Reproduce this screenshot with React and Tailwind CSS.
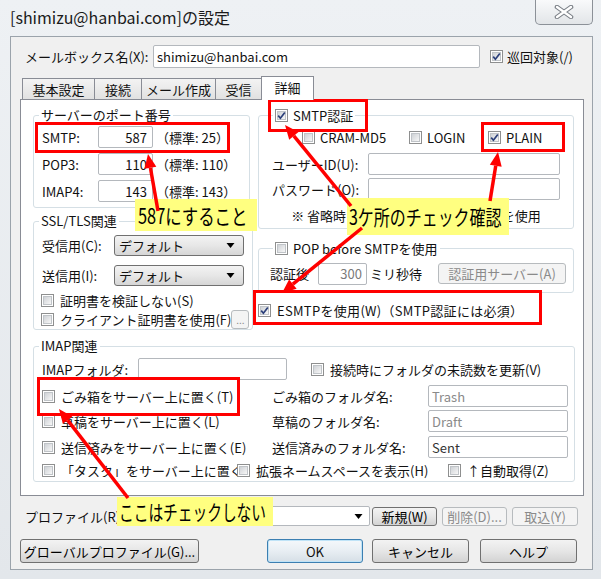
const Check = ({ checked, className = "" }) => (
  <span className={`inline-flex w-[13px] h-[13px] shrink-0 border border-[#8e8f8f] bg-white p-[1px] ${className}`}>
    <span className="relative flex-1 bg-linear-to-br from-[#cfd2d6] to-[#f7f7f7] border border-[#c0c4c8]">
      {checked && (
        <svg viewBox="0 0 9 9" className="absolute -left-[1px] -top-[1px] w-[9px] h-[9px]">
          <path d="M1.2 4.6 L3.4 7.2 L7.8 1.4" fill="none" stroke="#2b3f7a" strokeWidth="1.7" />
        </svg>
      )}
    </span>
  </span>
);

const Field = ({ className = "", children }) => (
  <div className={`h-[22px] flex items-center bg-white border border-[#b4b8bd] rounded-[2px] ${className}`}>
    {children}
  </div>
);

const Button = ({ className = "", disabled, children }) => (
  <div
    className={`flex items-center justify-center rounded-[3px] border ${
      disabled
        ? "border-[#b7bbbe] bg-[#f4f4f4] text-[#8a8a8a]"
        : "border-[#707070] bg-linear-to-b from-[#f3f3f3] via-[#e6e6e6] to-[#d3d3d3] text-black"
    } ${className}`}
  >
    {children}
  </div>
);

const Dropdown = ({ className = "" }) => (
  <div className={`flex items-center justify-between rounded-[3px] border border-[#707070] bg-linear-to-b from-[#f3f3f3] via-[#e7e7e7] to-[#d6d6d6] pl-[4px] pr-[8px] ${className}`}>
    <span>デフォルト</span>
    <svg viewBox="0 0 8 5" className="w-[9px] h-[5px]"><path d="M0 0 H8 L4 5 Z" fill="#000" /></svg>
  </div>
);

const Arrow = ({ x1, y1, x2, y2 }) => {
  const dx = x2 - x1, dy = y2 - y1;
  const len = Math.hypot(dx, dy);
  const ux = dx / len, uy = dy / len;
  const hl = 14, hw = 6;
  const bx = x2 - ux * hl, by = y2 - uy * hl;
  const px = -uy, py = ux;
  return (
    <g>
      <line x1={x1} y1={y1} x2={bx} y2={by} stroke="#ff0000" strokeWidth="3.5" />
      <polygon
        points={`${x2},${y2} ${bx + px * hw},${by + py * hw} ${bx - px * hw},${by - py * hw}`}
        fill="#ff0000"
      />
    </g>
  );
};

const Note = ({ className = "", scale = "scale-x-[0.78]", children }) => (
  <div className={`absolute bg-[#ffff80] flex items-center overflow-hidden ${className}`}>
    <span className={`inline-block origin-left ${scale} text-[21px] leading-none whitespace-nowrap text-black`}>{children}</span>
  </div>
);

export default function App() {
  return (
    <div className="relative w-[601px] h-[579px] overflow-hidden bg-linear-to-b from-[#eef1f4] to-[#e3e7eb] font-['Noto_Sans_CJK_JP','Noto_Sans',sans-serif] text-[13px] leading-none text-[#111]">
      {/* title bar */}
      <div className="h-[36px] flex items-start justify-between">
        <div className="pl-[10px] pt-[9px] text-[16px] text-[#1a1a1a]">[shimizu@hanbai.com]の設定</div>
        <div className="mr-[8px] w-[58px] h-[25px] rounded-b-[5px] border border-t-0 border-[#8c9198] bg-linear-to-b from-[#f9fafb] to-[#e2e5e8] flex items-center justify-center">
          <svg viewBox="0 0 22 14" className="w-[22px] h-[14px]">
            <path d="M4 2 L18 12 M18 2 L4 12" stroke="#7b8087" strokeWidth="4.6" strokeLinecap="round" />
            <path d="M4 2 L18 12 M18 2 L4 12" stroke="#ffffff" strokeWidth="2.4" strokeLinecap="round" />
          </svg>
        </div>
      </div>

      {/* client */}
      <div className="ml-[10px] w-[583px] h-[534px] border border-[#9ba3ab] bg-[#f0f0f0] flex flex-col">
        <div className="flex items-center h-[23px] mt-[8px]">
          <div className="w-[142px] pl-[14px]">メールボックス名(X):</div>
          <div className="w-[327px] h-[23px] flex items-center bg-white border border-[#b4b8bd] rounded-[2px] pl-[3px]">shimizu@hanbai.com</div>
          <Check checked className="ml-[10px]" />
          <span className="ml-[4px]">巡回対象(/)</span>
        </div>

        <div className="mt-[8px] ml-[9px] w-[564px] flex flex-col">
          {/* tabs */}
          <div className="flex items-end h-[23px] pl-[2px]">
            {[
              ["基本設定", "w-[73px]"],
              ["接続", "w-[48px]"],
              ["メール作成", "w-[75px]"],
              ["受信", "w-[47px]"],
            ].map(([t, w], i) => (
              <div
                key={t}
                className={`${w} h-[21px] ${i ? "-ml-px" : ""} flex items-center justify-center border border-b-0 border-[#898c95] bg-linear-to-b from-[#f3f3f3] to-[#e1e1e1]`}
              >
                {t}
              </div>
            ))}
            <div className="w-[53px] h-[24px] -ml-px -mb-px relative z-10 flex items-center justify-center border border-b-0 border-[#898c95] bg-white pb-[2px]">
              詳細
            </div>
          </div>

          {/* panel */}
          <div className="h-[397px] border border-[#898c95] bg-white flex flex-col">
            <div className="flex items-start pl-[12px]">
              {/* left column */}
              <div className="w-[217px] flex flex-col">
                <fieldset className="mt-[7px] border border-[#d5dfe5] rounded-[3px]">
                  <legend className="ml-[5px] px-[2px] h-[16px] leading-[16px]">サーバーのポート番号</legend>
                  <div className="flex flex-col pt-[3px] pb-[5px] gap-[5px] pl-[8px]">
                    {[
                      ["SMTP:", "587", "25"],
                      ["POP3:", "110", "110"],
                      ["IMAP4:", "143", "143"],
                    ].map(([l, v, s]) => (
                      <div key={l} className="flex items-center h-[22px]">
                        <span className="w-[56px]">{l}</span>
                        <Field className="w-[55px] justify-end pr-[5px]">{v}</Field>
                        <span className="ml-[3px]">（標準: {s}）</span>
                      </div>
                    ))}
                  </div>
                </fieldset>

                <fieldset className="mt-[5px] border border-[#d5dfe5] rounded-[3px]">
                  <legend className="ml-[5px] px-[2px] h-[16px] leading-[16px]">SSL/TLS関連</legend>
                  <div className="flex flex-col pt-[6px]">
                    <div className="flex items-center h-[21px]">
                      <span className="w-[80px] pl-[8px]">受信用(C):</span>
                      <Dropdown className="w-[130px] h-[21px]" />
                    </div>
                    <div className="flex items-center h-[21px] mt-[9px]">
                      <span className="w-[80px] pl-[8px]">送信用(I):</span>
                      <Dropdown className="w-[130px] h-[21px]" />
                    </div>
                    <div className="flex items-center h-[20px] mt-[4px] pl-[7px]">
                      <Check />
                      <span className="ml-[6px]">証明書を検証しない(S)</span>
                    </div>
                    <div className="flex items-center h-[19px] pl-[7px]">
                      <Check />
                      <span className="ml-[6px] whitespace-nowrap">クライアント証明書を使用(F)</span>
                      <Button disabled className="ml-auto mr-[3px] w-[18px] h-[19px] text-[10px]">...</Button>
                    </div>
                  </div>
                </fieldset>
              </div>

              {/* right column */}
              <div className="ml-[8px] w-[316px] flex flex-col">
                <fieldset className="mt-[7px] border border-[#d5dfe5] rounded-[3px]">
                  <legend className="ml-[14px] px-[2px] h-[16px] flex items-center gap-[5px]">
                    <Check checked />
                    <span>SMTP認証</span>
                  </legend>
                  <div className="flex flex-col pb-[4px]">
                    <div className="flex items-center h-[20px] mt-[4px] pl-[43px]">
                      <div className="w-[107px] flex items-center"><Check /><span className="ml-[5px]">CRAM-MD5</span></div>
                      <div className="w-[79px] flex items-center"><Check /><span className="ml-[5px]">LOGIN</span></div>
                      <div className="flex items-center"><Check checked /><span className="ml-[5px]">PLAIN</span></div>
                    </div>
                    <div className="flex items-center h-[22px] mt-[6px] pl-[13px]">
                      <span className="w-[96px]">ユーザーID(U):</span>
                      <Field className="w-[192px]" />
                    </div>
                    <div className="flex items-center h-[22px] mt-[3px] pl-[13px]">
                      <span className="w-[96px]">パスワード(O):</span>
                      <Field className="w-[192px]" />
                    </div>
                    <div className="flex items-center justify-center h-[18px] mt-[6px] whitespace-nowrap">
                      ※ 省略時は受信用のIDとパスワードを使用
                    </div>
                  </div>
                </fieldset>

                <fieldset className="mt-[11px] border border-[#d5dfe5] rounded-[3px]">
                  <legend className="ml-[14px] px-[2px] h-[16px] flex items-center gap-[5px]">
                    <Check />
                    <span>POP before SMTPを使用</span>
                  </legend>
                  <div className="flex items-center h-[21px] mt-[7px] mb-[8px] pl-[11px]">
                    <span className="w-[48px]">認証後</span>
                    <Field className="w-[49px] h-[21px] justify-end pr-[4px] text-[#7a7a7a]">300</Field>
                    <span className="ml-[3px]">ミリ秒待</span>
                    <Button disabled className="ml-auto mr-[7px] w-[128px] h-[21px]">認証用サーバー(A)</Button>
                  </div>
                </fieldset>

                <div className="flex items-center h-[20px] mt-[7px]">
                  <Check checked />
                  <span className="ml-[6px] whitespace-nowrap tracking-[0.3px]">ESMTPを使用(W)（SMTP認証には必須）</span>
                </div>
              </div>
            </div>

            {/* IMAP */}
            <fieldset className="mt-[8px] ml-[12px] w-[542px] border border-[#d5dfe5] rounded-[3px]">
              <legend className="ml-[5px] px-[2px] h-[16px] leading-[16px]">IMAP関連</legend>
              <div className="flex flex-col pl-[8px] pb-[2px]">
                <div className="flex items-center h-[22px] mt-[4px]">
                  <span className="w-[96px]">IMAPフォルダ:</span>
                  <Field className="w-[149px]" />
                  <Check className="ml-[24px]" />
                  <span className="ml-[6px]">接続時にフォルダの未読数を更新(V)</span>
                </div>
                {[
                  ["ごみ箱をサーバー上に置く(T)", "ごみ箱のフォルダ名:", "Trash", "mt-[5px]", "text-[#8a8a8a]"],
                  ["草稿をサーバー上に置く(L)", "草稿のフォルダ名:", "Draft", "mt-[3px]", "text-[#8a8a8a]"],
                  ["送信済みをサーバー上に置く(E)", "送信済みのフォルダ名:", "Sent", "mt-[4px]", "text-[#333]"],
                ].map(([a, b, v, m, c]) => (
                  <div key={v} className={`flex items-center h-[22px] ${m}`}>
                    <div className="w-[230px] flex items-center">
                      <Check />
                      <span className="ml-[6px] whitespace-nowrap">{a}</span>
                    </div>
                    <span className="w-[156px]">{b}</span>
                    <Field className={`w-[140px] pl-[3px] ${c}`}>{v}</Field>
                  </div>
                ))}
                <div className="flex items-center h-[18px] mt-[3px]">
                  <Check />
                  <span className="ml-[6px] w-[176px] overflow-hidden whitespace-nowrap">「タスク」をサーバー上に置く(K)</span>
                  <Check />
                  <span className="ml-[6px] w-[192px] whitespace-nowrap">拡張ネームスペースを表示(H)</span>
                  <Check />
                  <span className="ml-[6px] whitespace-nowrap">↑自動取得(Z)</span>
                </div>
              </div>
            </fieldset>
          </div>
        </div>

        {/* profile */}
        <div className="flex items-center h-[20px] mt-[10px]">
          <span className="w-[107px] pl-[14px] whitespace-nowrap">プロファイル(R):</span>
          <div className="w-[252px] h-[20px] flex items-center justify-end pr-[6px] bg-white border border-[#b4b8bd] rounded-[2px]">
            <svg viewBox="0 0 8 5" className="w-[9px] h-[5px]"><path d="M0 0 H8 L4 5 Z" fill="#000" /></svg>
          </div>
          <Button className="ml-[2px] w-[65px] h-[19px]">新規(W)</Button>
          <Button disabled className="ml-[5px] w-[65px] h-[19px]">削除(D)...</Button>
          <Button disabled className="ml-[5px] w-[66px] h-[19px]">取込(Y)</Button>
        </div>

        <div className="flex items-center h-[24px] mt-[13px]">
          <Button className="ml-[9px] w-[179px] h-[24px]">グローバルプロファイル(G)...</Button>
          <div className="ml-[68px] w-[96px] h-[24px] flex items-center justify-center rounded-[3px] border border-[#3c7fb1] bg-linear-to-b from-[#f4f8fb] via-[#e8eef3] to-[#d6dfe6] shadow-[inset_0_0_0_1px_#bfe3f7]">
            OK
          </div>
          <Button className="ml-[9px] w-[97px] h-[24px]">キャンセル</Button>
          <Button className="ml-[11px] w-[97px] h-[24px]">ヘルプ</Button>
        </div>
      </div>

      {/* annotations */}
      <div className="absolute left-[35px] top-[122px] w-[195px] h-[31px] border-[3px] border-[#ff0000]" />
      <div className="absolute left-[268px] top-[99px] w-[100px] h-[33px] border-[3px] border-[#ff0000]" />
      <div className="absolute left-[481px] top-[122px] w-[84px] h-[30px] border-[3px] border-[#ff0000]" />
      <div className="absolute left-[253px] top-[290px] w-[289px] h-[35px] border-[3px] border-[#ff0000]" />
      <div className="absolute left-[37px] top-[377px] w-[203px] h-[39px] border-[3px] border-[#ff0000]" />

      <Note className="left-[135px] top-[199px] w-[122px] h-[32px] pl-[3px]">587にすること</Note>
      <Note className="left-[347px] top-[198px] w-[162px] h-[37px] pl-[2px]" scale="scale-x-[0.76]">3ケ所のチェック確認</Note>
      <Note className="left-[117px] top-[497px] w-[156px] h-[29px] pl-[2px]" scale="scale-x-[0.7]">ここはチェックしない</Note>

      <svg className="absolute left-0 top-0 w-[601px] h-[579px] pointer-events-none" viewBox="0 0 601 579">
        <Arrow x1={158} y1={211} x2={148} y2={154} />
        <Arrow x1={351} y1={206} x2={285} y2={125} />
        <Arrow x1={490} y1={201} x2={498} y2={152} />
        <Arrow x1={362} y1={228} x2={282} y2={293} />
        <Arrow x1={128} y1={498} x2={59} y2={409} />
      </svg>
    </div>
  );
}
